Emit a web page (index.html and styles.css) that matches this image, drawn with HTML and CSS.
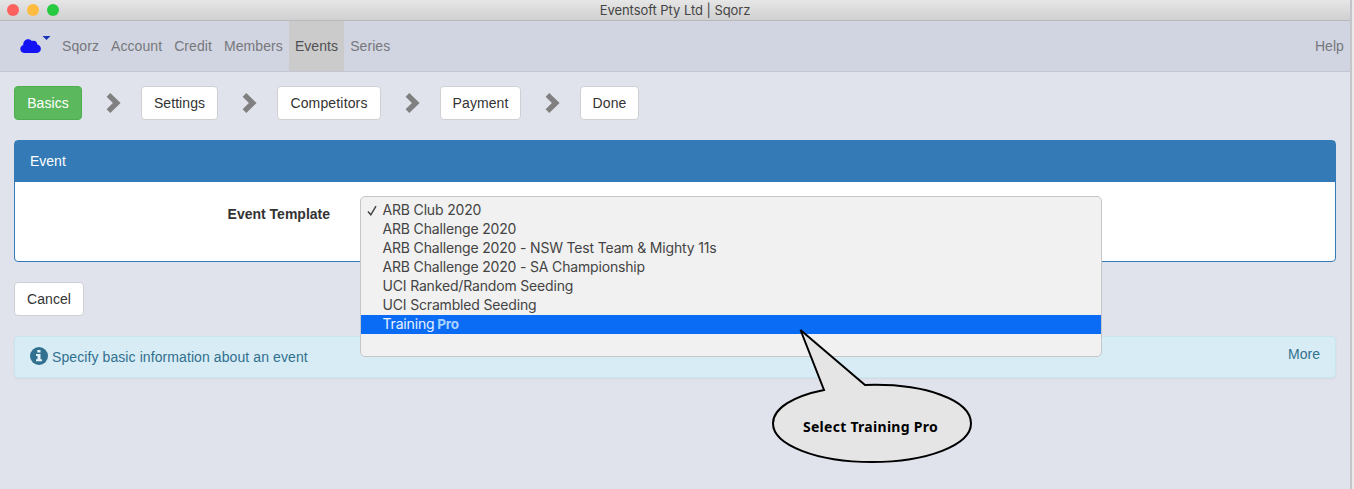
FILE: index.html
```html
<!DOCTYPE html>
<html lang="en">
<head>
<meta charset="utf-8">
<title>Eventsoft Pty Ltd | Sqorz</title>
<link rel="stylesheet" href="styles.css">
</head>
<body>
<div class="window">
  <header class="titlebar">
    <div class="lights"><i class="light red"></i><i class="light amber"></i><i class="light green"></i></div>
    <span class="title">Eventsoft Pty Ltd | Sqorz</span>
  </header>
  <nav class="navbar">
    <a class="brand"><svg width="32" height="18" viewBox="0 0 32 18"><path d="M5 17C2 17 .3 15.200.3 12.900c0-2 1.300-3.500 3-4C2.900 5.800 5.200 3.300 8 3.300c1.600 0 2.900.6 3.800 1.700 2.900-1.200 5.600.7 5.500 3.500 2.100.5 3.600 2.100 3.600 4.200 0 2.600-1.900 4.300-4.400 4.300z" fill="#1313f5"/><path d="M22.500 0h8L26.500 4z" fill="#1a35b8"/></svg></a>
    <a class="nav-item">Sqorz</a>
    <a class="nav-item">Account</a>
    <a class="nav-item">Credit</a>
    <a class="nav-item">Members</a>
    <a class="nav-item active">Events</a>
    <a class="nav-item">Series</a>
    <a class="nav-item help">Help</a>
  </nav>
  <main class="content">
    <div class="steps">
      <button class="btn success basics">Basics</button>
      <svg class="arrow" viewBox="0 0 15 20"><path d="M4.300 0L14.600 10 4.300 20 .6 16.300 6.900 10 .6 3.700z"/></svg>
      <button class="btn settings">Settings</button>
      <svg class="arrow" viewBox="0 0 15 20"><path d="M4.300 0L14.600 10 4.300 20 .6 16.300 6.900 10 .6 3.700z"/></svg>
      <button class="btn competitors">Competitors</button>
      <svg class="arrow" viewBox="0 0 15 20"><path d="M4.300 0L14.600 10 4.300 20 .6 16.300 6.900 10 .6 3.700z"/></svg>
      <button class="btn payment">Payment</button>
      <svg class="arrow" viewBox="0 0 15 20"><path d="M4.300 0L14.600 10 4.300 20 .6 16.300 6.900 10 .6 3.700z"/></svg>
      <button class="btn done">Done</button>
    </div>
    <section class="panel">
      <div class="panel-heading">Event</div>
      <div class="panel-body">
        <label class="label">Event Template</label>
        <ul class="menu">
          <li><svg class="check" viewBox="0 0 10 11"><path d="M1 6.500L3.800 9.800 9 1.200"/></svg>ARB Club 2020</li>
          <li>ARB Challenge 2020</li>
          <li>ARB Challenge 2020 - NSW Test Team &amp; Mighty 11s</li>
          <li>ARB Challenge 2020 - SA Championship</li>
          <li>UCI Ranked/Random Seeding</li>
          <li>UCI Scrambled Seeding</li>
          <li class="selected">Training <b>Pro</b></li>
        </ul>
      </div>
    </section>
    <button class="btn cancel">Cancel</button>
    <div class="alert">
      <svg class="info" viewBox="0 0 18 18"><circle cx="9" cy="9" r="9"/><path d="M7.300 2.900h3.200v2.500H7.300zM6 7h4.500v5.300h1.500v1.900H6v-1.900h1.500V8.900H6z"/></svg>
      <span class="hint">Specify basic information about an event</span>
      <a class="more">More</a>
    </div>
  </main>
</div>
<div class="callout">
  <svg width="204" height="140" viewBox="770 326 204 140"><path d="M800.500 330L865 385C925 383 971 400 971 423.500C971 445 927 462 872 462C817 462 773 445 773 423.500C773 408 794 396 824 390Z"/></svg>
  <span class="callout-text">Select Training Pro</span>
</div>
</body>
</html>
```
FILE: styles.css
```css
* { box-sizing: border-box; }
body {
  margin: 0;
  height: 489px;
  overflow: hidden;
  background: #e9e9eb;
  font: 14px/20px "Liberation Sans", Arial, sans-serif;
  color: #333;
}
.window {
  width: 1352px;
  height: 489px;
  background: #e0e3ec;
  border-right: 2px solid #c5c5c9;
}
.titlebar {
  position: relative;
  display: flex;
  align-items: center;
  justify-content: center;
  height: 21px;
  background: linear-gradient(#e6e6e6, #d0d0d0);
  border-bottom: 1px solid #b8b8bd;
}
.lights { position: absolute; left: 7px; top: 4px; display: flex; gap: 8px; }
.light { width: 12px; height: 12px; border-radius: 50%; }
.red { background: #fc615d; }
.amber { background: #fdbc40; }
.green { background: #28ca42; }
.title { font: 13px/20px Inter, sans-serif; letter-spacing: -0.05px; color: #444; }
.navbar {
  display: flex;
  height: 51px;
  padding-left: 20px;
  background: #d1d5e1;
  border-bottom: 1px solid #c3c6d0;
}
.brand { width: 36px; padding-top: 15px; }
.brand svg { display: block; }
.nav-item { padding: 15px 6px; letter-spacing: 0.08px; color: #77777c; }
.nav-item.active { background: #cbcbcc; color: #505052; }
.help { margin-left: auto; }
.content { padding: 14px 14px 0; }
.steps { display: flex; align-items: center; }
.btn {
  display: block;
  height: 34px;
  padding: 0;
  border: 1px solid #cfd0d4;
  border-radius: 4px;
  background: #fff;
  color: #333;
  font: inherit;
  letter-spacing: 0.08px;
  text-align: center;
}
.success { background: #5cb85c; border-color: #4cae4c; color: #fff; }
.basics { width: 68px; }
.settings { width: 77px; }
.competitors { width: 104px; letter-spacing: 0.16px; }
.payment { width: 81px; }
.done { width: 59px; }
.cancel { width: 70px; margin-top: 20px; }
.arrow { width: 15px; height: 20px; margin: 0 20px 0 24px; fill: #808080; }
.panel {
  height: 122px;
  margin-top: 20px;
  border: 1px solid #337ab7;
  border-radius: 4px;
  background: #fff;
}
.panel-heading { height: 41px; padding: 10px 15px; background: #337ab7; color: #fff; }
.panel-body { position: relative; display: flex; }
.label { width: 315px; padding-top: 22px; text-align: right; font-weight: bold; }
.menu {
  position: absolute;
  left: 345px;
  top: 14px;
  width: 742px;
  height: 161px;
  margin: 0;
  padding: 4px 0 0;
  list-style: none;
  background: #f1f1f1;
  border: 1px solid #c6c6c8;
  border-radius: 5px;
  font: 14px/19px Inter, sans-serif;
  letter-spacing: -0.17px;
  color: #444;
}
.menu li { position: relative; height: 19px; padding-left: 21.5px; line-height: 18px; }
.check { position: absolute; left: 6px; top: 4px; width: 10px; height: 11px; fill: none; stroke: #444; stroke-width: 1.5; }
.menu .selected { background: #0a6cf5; color: #e9f2ff; }
.selected b { margin-left: -1px; color: #a9d2ff; font-size: 13.5px; }
.alert {
  display: flex;
  height: 42px;
  margin-top: 20px;
  padding: 10px 15px;
  border: 1px solid #c9e6ef;
  border-radius: 4px;
  background: #d8ecf5;
  color: #31708f;
  box-shadow: 0 1px 2px rgba(0,0,0,.05);
}
.info { width: 18px; height: 18px; margin-right: 4px; fill: #31708f; }
.info path { fill: #e2f2f8; }
.hint { letter-spacing: 0.09px; }
.more { margin: -3px 0 0 auto; }
.callout { position: absolute; left: 770px; top: 326px; width: 204px; height: 140px; }
.callout path { fill: #e5e5e5; stroke: #000; stroke-width: 2; }
.callout-text {
  position: absolute;
  left: 0;
  top: 91px;
  width: 201px;
  text-align: center;
  white-space: nowrap;
  font: bold 14px/20px "Noto Sans", sans-serif;
  letter-spacing: 0.28px;
  color: #000;
}
```
